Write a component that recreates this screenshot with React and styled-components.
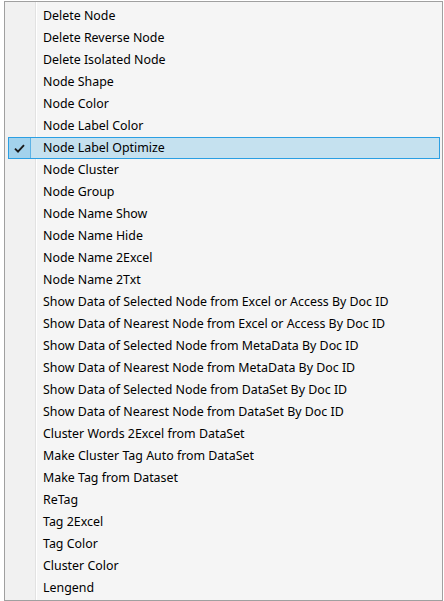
import styled, { createGlobalStyle } from 'styled-components'

const items = [
    'Delete Node',
    'Delete Reverse Node',
    'Delete Isolated Node',
    'Node Shape',
    'Node Color',
    'Node Label Color',
    'Node Label Optimize',
    'Node Cluster',
    'Node Group',
    'Node Name Show',
    'Node Name Hide',
    'Node Name 2Excel',
    'Node Name 2Txt',
    'Show Data of Selected Node from Excel or Access By Doc ID',
    'Show Data of Nearest Node from Excel or Access By Doc ID',
    'Show Data of Selected Node from MetaData By Doc ID',
    'Show Data of Nearest Node from MetaData By Doc ID',
    'Show Data of Selected Node from DataSet By Doc ID',
    'Show Data of Nearest Node from DataSet By Doc ID',
    'Cluster Words 2Excel from DataSet',
    'Make Cluster Tag Auto from DataSet',
    'Make Tag from Dataset',
    'ReTag',
    'Tag 2Excel',
    'Tag Color',
    'Cluster Color',
    'Lengend',
]

const checked = 'Node Label Optimize'

export default function App() {
    return (
        <>
            <GlobalStyle />
            <Page>
                <Menu>
                    {items.map(label => {
                        const active = label === checked
                        return (
                            <Item key={label} $active={active}>
                                <CheckCell $active={active}>
                                    {active && (
                                        <svg width='11' height='9' viewBox='0 0 11 9'>
                                            <path d='M1 4.6 L4 7.6 L10 1.2' fill='none' stroke='#1a1a1a' strokeWidth='1.9' />
                                        </svg>
                                    )}
                                </CheckCell>
                                <Label>{label}</Label>
                            </Item>
                        )
                    })}
                </Menu>
            </Page>
        </>
    )
}

const GlobalStyle = createGlobalStyle`
    html, body {
        margin: 0;
        background: #ffffff;
    }
`

const Page = styled.div`
    width: 444px;
    height: 601px;
    padding: 1px 0 0 4px;
    box-sizing: border-box;
`

const Menu = styled.div`
    width: 439px;
    height: 600px;
    box-sizing: border-box;
    border: 1px solid #a0a0a0;
    padding: 3px 2px 0 3px;
    display: flex;
    flex-direction: column;
    background: linear-gradient(
        90deg,
        #f1f1f1 0,
        #f1f1f1 30px,
        #e2e2e2 30px,
        #e2e2e2 31px,
        #ffffff 31px,
        #ffffff 32px,
        #f5f5f5 32px
    );
    font-family: 'Noto Sans', 'Liberation Sans', sans-serif;
    font-size: 12.4px;
    color: #000;
`

const Item = styled.div`
    height: 22px;
    box-sizing: border-box;
    display: flex;
    align-items: center;
    border: 1px solid ${({ $active }) => ($active ? '#2b9fe3' : 'transparent')};
    background: ${({ $active }) => ($active ? '#c5e1ef' : 'transparent')};
`

const CheckCell = styled.div`
    width: 22px;
    height: 100%;
    display: flex;
    align-items: center;
    justify-content: center;
    box-sizing: border-box;
    border-right: 1px solid ${({ $active }) => ($active ? '#5cb3e6' : 'transparent')};
    background: ${({ $active }) => ($active ? '#a3d2ec' : 'transparent')};
`

const Label = styled.span`
    padding-left: 12px;
    white-space: nowrap;
    line-height: 20px;
`
